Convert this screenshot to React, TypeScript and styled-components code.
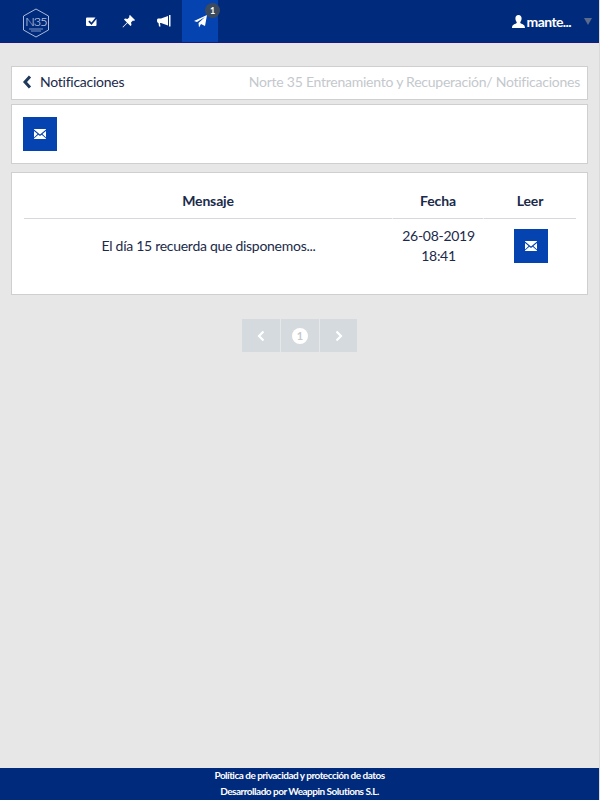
import styled, { createGlobalStyle } from "styled-components";

const GlobalStyle = createGlobalStyle`
  html, body {
    margin: 0;
    padding: 0;
    height: 100%;
  }
  body {
    font-family: "Lato", "Liberation Sans", sans-serif;
    background-color: #e7e7e7;
    color: #1b2a4a;
  }
`;

const Page = styled.div`
  min-height: 800px;
  display: flex;
  flex-direction: column;
  border-right: 1px solid #dadada;
`;

const Navbar = styled.header`
  height: 42px;
  background-color: #002a7c;
  border-bottom: 1px solid #1a1a80;
  display: flex;
  align-items: stretch;
  padding-left: 23px;
`;

const Logo = styled.svg`
  width: 28px;
  height: 30px;
  margin: 8px 23px 0 0;
`;

const NavItem = styled.a<{ $active?: boolean }>`
  position: relative;
  width: 36px;
  display: flex;
  align-items: center;
  justify-content: center;
  background-color: ${(p) => (p.$active ? "#0443b0" : "transparent")};
`;

const Badge = styled.span`
  position: absolute;
  top: 3px;
  right: -2px;
  width: 15px;
  height: 15px;
  border-radius: 50%;
  background-color: #3c4a5e;
  color: #fff;
  font-size: 9px;
  font-weight: 700;
  line-height: 15px;
  text-align: center;
`;

const UserMenu = styled.div`
  margin-left: auto;
  display: flex;
  align-items: center;
  gap: 2px;
  padding-right: 7px;
  color: #fff;
  font-size: 14px;
  font-weight: 700;
  letter-spacing: -0.6px;
`;

const Caret = styled.span`
  width: 0;
  height: 0;
  margin-left: 11px;
  border-left: 4px solid transparent;
  border-right: 4px solid transparent;
  border-top: 7px solid #5a6b8c;
`;

const Content = styled.main`
  flex: 1;
  padding: 23px 11px 0 11px;
`;

const Panel = styled.section`
  background-color: #fff;
  border: 1px solid #cfcfcf;
  box-sizing: border-box;
`;

const Breadcrumb = styled(Panel)`
  height: 34px;
  display: flex;
  align-items: center;
  padding: 0 7px 3px 10px;
  margin-bottom: 4px;
`;

const BackLink = styled.svg`
  width: 10px;
  height: 14px;
  margin-right: 8px;
  color: #1f3a5c;
`;

const Title = styled.h1`
  margin: 0;
  font-size: 14px;
  font-weight: 400;
  letter-spacing: -0.25px;
  color: #1b2a4a;
`;

const Trail = styled.span`
  margin-left: auto;
  font-size: 14px;
  letter-spacing: -0.25px;
  color: #c4c8cd;
`;

const Toolbar = styled(Panel)`
  height: 60px;
  padding: 12px 11px;
  margin-bottom: 8px;
`;

const MailButton = styled.button`
  width: 34px;
  height: 34px;
  padding: 0;
  border: none;
  background-color: #0443b0;
  display: flex;
  align-items: center;
  justify-content: center;
`;

const TablePanel = styled(Panel)`
  height: 123px;
  padding: 11px 11px 0 12px;
`;

const Table = styled.table`
  width: 100%;
  border-collapse: separate;
  border-spacing: 0;
  table-layout: fixed;
`;

const HeadCell = styled.th<{ $width?: number }>`
  width: ${(p) => (p.$width ? `${p.$width}px` : "auto")};
  height: 35px;
  box-sizing: border-box;
  padding: 0 0 2px;
  border-bottom: 1px solid #d5d9de;
  border-right: 1px solid #fff;
  font-size: 14px;
  font-weight: 700;
  letter-spacing: -0.15px;
  color: #1b2a4a;
  text-align: center;

  &:last-child {
    border-right: none;
  }
`;

const Cell = styled.td`
  padding: 7px 0 0;
  font-size: 14px;
  line-height: 20px;
  letter-spacing: -0.28px;
  color: #1b2a4a;
  text-align: center;
  vertical-align: top;
`;

const MessageCell = styled(Cell)`
  padding-top: 17px;
`;

const ButtonCell = styled.div`
  display: flex;
  justify-content: center;
  margin-top: 3px;
  padding-left: 2px;
`;

const Pagination = styled.nav`
  display: flex;
  justify-content: center;
  gap: 1px;
  margin-top: 24px;
`;

const PageButton = styled.span`
  width: 38px;
  height: 33px;
  background-color: #d5dadf;
  display: flex;
  align-items: center;
  justify-content: center;

  &:last-child {
    width: 37px;
  }
`;

const PageNumber = styled.span`
  width: 16px;
  height: 16px;
  border-radius: 50%;
  background-color: #fff;
  color: #c4c9ce;
  font-size: 11px;
  font-weight: 700;
  line-height: 16px;
  text-align: center;
`;

const Footer = styled.footer`
  height: 32px;
  background-color: #002a7c;
  color: #fff;
  font-size: 10px;
  font-weight: 700;
  line-height: 16px;
  letter-spacing: -0.5px;
  text-align: center;
`;

const FooterText = styled.div`
  margin-top: -1px;
`;

const Envelope = ({ size = 12 }: { size?: number }) => (
  <svg width={size} height={(size * 10) / 12} viewBox="0 0 12 10" fill="#fff">
    <path d="M0 0.6 6 5.4 12 0.6V0H0Z" />
    <path d="M0 2V8.4L3.6 4.9ZM12 2V8.4L8.4 4.9Z" />
    <path d="M0 10H12V9.4L7.7 5.7 6 7 4.3 5.7 0 9.4Z" />
  </svg>
);

const ChevronPath = ({ flip }: { flip?: boolean }) => (
  <svg width="8" height="12" viewBox="0 0 8 12" style={flip ? { transform: "scaleX(-1)" } : undefined}>
    <path d="M6.5 1.5 2 6l4.500 4.500" fill="none" stroke="#fff" strokeWidth="2.200" />
  </svg>
);

const App = () => {
  return (
    <Page>
      <GlobalStyle />
      <Navbar>
        <Logo viewBox="0 0 28 30">
          <path d="M13 1 25.500 8v14L13 29 .5 22V8z" fill="none" stroke="#d5def0" strokeWidth="0.8" />
          <text x="13" y="18" fontSize="12.500" fontWeight="300" letterSpacing="-0.8" fill="#eef2f9" textAnchor="middle" fontFamily="Lato">N35</text>
          <rect x="6" y="20.500" width="14" height="1" fill="#7f95c4" />
          <rect x="8" y="22.500" width="10" height="1" fill="#7f95c4" />
        </Logo>
        <NavItem>
          <svg width="12" height="11" viewBox="0 0 12 11" fill="#fff">
            <path d="M1 1.500h8.500L5.500 6.500 3.500 4.500 2.300 5.700l3.200 3.300L10.500 3v6a1 1 0 0 1-1 1H1a1 1 0 0 1-1-1V2.500a1 1 0 0 1 1-1z" />
          </svg>
        </NavItem>
        <NavItem>
          <svg width="13" height="13" viewBox="0 0 13 13" fill="#fff">
            <path d="M8 0 13 5 12 6 11 5.500 9 7.500 9.500 10 8.500 11 5.500 8 1 12.500.5 12 5 7.500 2 4.500 3 3.500 5.500 4 7.500 2 7 1z" />
          </svg>
        </NavItem>
        <NavItem>
          <svg width="14" height="12" viewBox="0 0 14 12" fill="#fff">
            <path d="M12 0h1.500v11.500H12zM11 1v9.500L4 8H3L3.500 11.500H2L1.500 8C.6 8 0 7 0 5.500S.6 3.500 1.500 3.500H4z" />
          </svg>
        </NavItem>
        <NavItem $active>
          <svg width="13" height="13" viewBox="0 0 13 13" fill="#fff">
            <path d="M13 0 11 11 7 9 5 12.500 4.500 8 11 2 3 7 0 6z" />
          </svg>
          <Badge>1</Badge>
        </NavItem>
        <UserMenu>
          <svg width="13" height="13" viewBox="0 0 13 13" fill="#fff">
            <path d="M6.500 0C8.500 0 9.600 1.500 9.600 3.500S8.700 6.500 8.300 7.200c-.2.700.2 1.100 1.200 1.500 1.800.7 3.500 1.300 3.500 4.300H0c0-3 1.700-3.600 3.500-4.300 1-.4 1.400-.8 1.200-1.500C4.300 6.500 3.400 5.500 3.400 3.500S4.500 0 6.500 0z" />
          </svg>
          mante...
          <Caret />
        </UserMenu>
      </Navbar>
      <Content>
        <Breadcrumb>
          <BackLink viewBox="0 0 10 14">
            <path d="M8 1.500 3 7l5 5.500" fill="none" stroke="currentColor" strokeWidth="3" />
          </BackLink>
          <Title>Notificaciones</Title>
          <Trail>Norte 35 Entrenamiento y Recuperación/ Notificaciones</Trail>
        </Breadcrumb>
        <Toolbar>
          <MailButton>
            <Envelope />
          </MailButton>
        </Toolbar>
        <TablePanel>
          <Table>
            <thead>
              <tr>
                <HeadCell>Mensaje</HeadCell>
                <HeadCell $width={91}>Fecha</HeadCell>
                <HeadCell $width={92}>Leer</HeadCell>
              </tr>
            </thead>
            <tbody>
              <tr>
                <MessageCell>El día 15 recuerda que disponemos...</MessageCell>
                <Cell>
                  26-08-2019
                  <br />
                  18:41
                </Cell>
                <Cell>
                  <ButtonCell>
                    <MailButton>
                      <Envelope />
                    </MailButton>
                  </ButtonCell>
                </Cell>
              </tr>
            </tbody>
          </Table>
        </TablePanel>
        <Pagination>
          <PageButton>
            <ChevronPath />
          </PageButton>
          <PageButton>
            <PageNumber>1</PageNumber>
          </PageButton>
          <PageButton>
            <ChevronPath flip />
          </PageButton>
        </Pagination>
      </Content>
      <Footer>
        <FooterText>
          Política de privacidad y protección de datos
          <br />
          Desarrollado por Weappin Solutions S.L.
        </FooterText>
      </Footer>
    </Page>
  );
};

export default App;
